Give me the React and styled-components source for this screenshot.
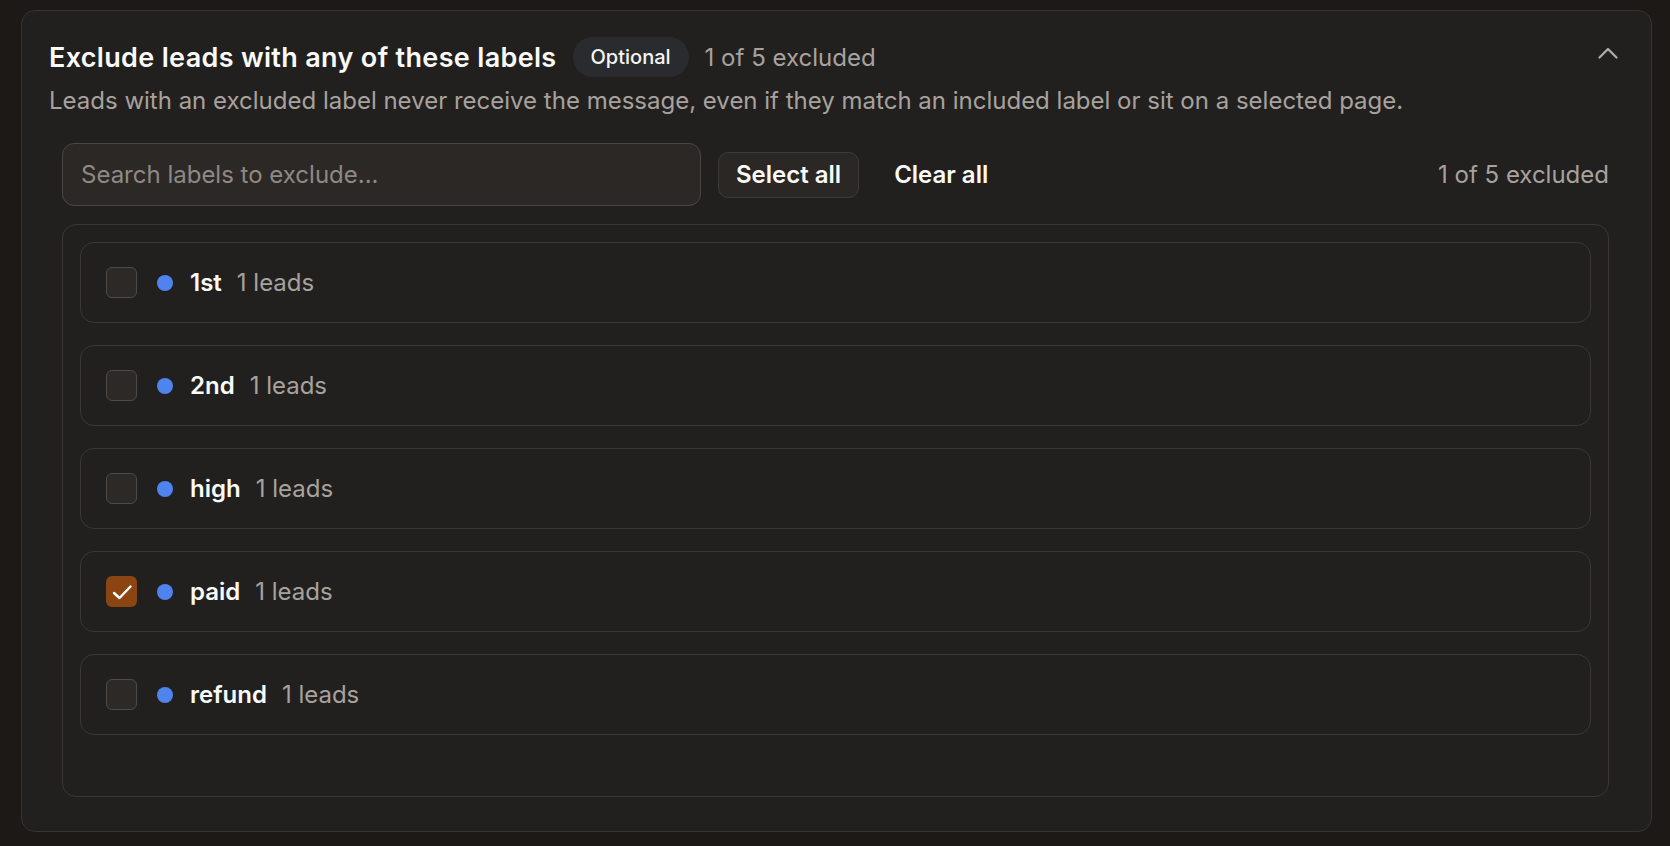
import React, { useState } from 'react'
import styled, { createGlobalStyle } from 'styled-components'

const GlobalStyle = createGlobalStyle`
  * { box-sizing: border-box; }
  html, body {
    margin: 0;
    background: #1c1917;
    font-family: Inter, "Noto Sans", "Liberation Sans", sans-serif;
    -webkit-font-smoothing: antialiased;
  }
`

const LABELS = [
  { name: '1st', leads: 1 },
  { name: '2nd', leads: 1 },
  { name: 'high', leads: 1 },
  { name: 'paid', leads: 1 },
  { name: 'refund', leads: 1 },
]

const ChevronUp = () => (
  <svg width="20" height="12" viewBox="0 0 20 12" fill="none">
    <polyline points="1.5,10.5 10,2 18.5,10.5" stroke="#b3ada8" strokeWidth="2.2" strokeLinecap="round" strokeLinejoin="round" />
  </svg>
)

const CheckMark = () => (
  <svg width="30" height="30" viewBox="0 0 30 30" fill="none">
    <polyline points="7,16 12.5,21 23.5,9.5" stroke="#fff" strokeWidth="2.4" strokeLinecap="round" strokeLinejoin="round" />
  </svg>
)

const App = () => {
  const [excluded, setExcluded] = useState(['paid'])
  const [query, setQuery] = useState('')

  const toggle = (name) =>
    setExcluded((list) => (list.includes(name) ? list.filter((n) => n !== name) : [...list, name]))

  const visible = LABELS.filter((l) => l.name.toLowerCase().includes(query.toLowerCase()))
  const summary = `${excluded.length} of ${LABELS.length} excluded`

  return (
    <>
      <GlobalStyle />
      <Card>
        <Header>
          <Title>Exclude leads with any of these labels</Title>
          <Badge>Optional</Badge>
          <Muted>{summary}</Muted>
          <CollapseButton aria-label="Collapse">
            <ChevronUp />
          </CollapseButton>
        </Header>
        <Description>
          Leads with an excluded label never receive the message, even if they match an included label or sit on a selected page.
        </Description>

        <Body>
          <Toolbar>
            <SearchInput
              placeholder="Search labels to exclude..."
              value={query}
              onChange={(e) => setQuery(e.target.value)}
            />
            <ActionButton $outlined onClick={() => setExcluded(LABELS.map((l) => l.name))}>
              Select all
            </ActionButton>
            <ActionButton onClick={() => setExcluded([])}>Clear all</ActionButton>
            <Muted $right>{summary}</Muted>
          </Toolbar>

          <List>
            {visible.map((label) => {
              const checked = excluded.includes(label.name)
              return (
                <Row key={label.name} onClick={() => toggle(label.name)}>
                  <Checkbox $checked={checked}>{checked && <CheckMark />}</Checkbox>
                  <Dot />
                  <LabelName>{label.name}</LabelName>
                  <LeadCount>{label.leads} leads</LeadCount>
                </Row>
              )
            })}
          </List>
        </Body>
      </Card>
    </>
  )
}

export default App

const Card = styled.section`
  margin: 10px 18px 14px 21px;
  height: 822px;
  background: #21201f;
  border: 1px solid #363432;
  border-radius: 14px;
  padding: 26px 27px 34px 27px;
  display: flex;
  flex-direction: column;
`

const Header = styled.div`
  display: flex;
  align-items: center;
  height: 40px;
`

const Title = styled.h2`
  margin: 0;
  font-size: 27px;
  font-weight: 600;
  color: #fafaf9;
  letter-spacing: 0.33px;
`

const Badge = styled.span`
  margin-left: 16px;
  height: 40px;
  padding: 0 18px;
  display: inline-flex;
  align-items: center;
  border-radius: 20px;
  background: #2a2b2f;
  color: #f5f5f4;
  font-size: 20px;
  font-weight: 500;
`

const Muted = styled.span`
  margin-left: ${(p) => (p.$right ? 'auto' : '16px')};
  font-size: 24px;
  color: #a8a29e;
`

const CollapseButton = styled.button`
  margin-left: auto;
  align-self: flex-start;
  width: 32px;
  height: 32px;
  padding: 0;
  border: none;
  background: none;
  display: flex;
  align-items: center;
  justify-content: center;
  cursor: pointer;
`

const Description = styled.p`
  margin: 8px 0 0;
  font-size: 24px;
  line-height: 31px;
  color: #a8a29e;
`

const Body = styled.div`
  margin-top: 27px;
  padding: 0 15px 0 13px;
  display: flex;
  flex-direction: column;
  gap: 18px;
`

const Toolbar = styled.div`
  display: flex;
  align-items: center;
  gap: 17px;
`

const SearchInput = styled.input`
  width: 639px;
  height: 63px;
  padding: 0 18px;
  border-radius: 12px;
  border: 1.5px solid #4a4643;
  background: #2b2825;
  color: #fafaf9;
  font-family: inherit;
  font-size: 24px;
  outline: none;

  &::placeholder {
    color: #8f8985;
  }
`

const ActionButton = styled.button`
  height: 46px;
  padding: 0 17px;
  border-radius: 10px;
  border: 1px solid ${(p) => (p.$outlined ? '#3d3a37' : 'transparent')};
  background: ${(p) => (p.$outlined ? '#2a2725' : 'transparent')};
  color: #fafaf9;
  font-family: inherit;
  font-size: 24px;
  font-weight: 600;
  cursor: pointer;
`

const List = styled.div`
  height: 573px;
  padding: 17px;
  border: 1px solid #393633;
  border-radius: 14px;
  display: flex;
  flex-direction: column;
  gap: 22px;
  overflow-y: auto;
`

const Row = styled.div`
  flex: none;
  height: 81px;
  padding: 0 25px;
  border: 1px solid #3a3734;
  border-radius: 14px;
  display: flex;
  align-items: center;
  cursor: pointer;
`

const Checkbox = styled.span`
  width: 31px;
  height: 31px;
  border-radius: 6px;
  border: ${(p) => (p.$checked ? 'none' : '1.5px solid #4d4a47')};
  background: ${(p) => (p.$checked ? '#8b4513' : '#2c2926')};
  display: flex;
  align-items: center;
  justify-content: center;
  margin-right: 20px;
`

const Dot = styled.span`
  width: 16px;
  height: 16px;
  border-radius: 50%;
  background: #4f84ee;
  margin-right: 17px;
`

const LabelName = styled.span`
  font-size: 24px;
  font-weight: 600;
  color: #fafaf9;
`

const LeadCount = styled.span`
  margin-left: 15px;
  font-size: 24px;
  color: #a8a29e;
`
